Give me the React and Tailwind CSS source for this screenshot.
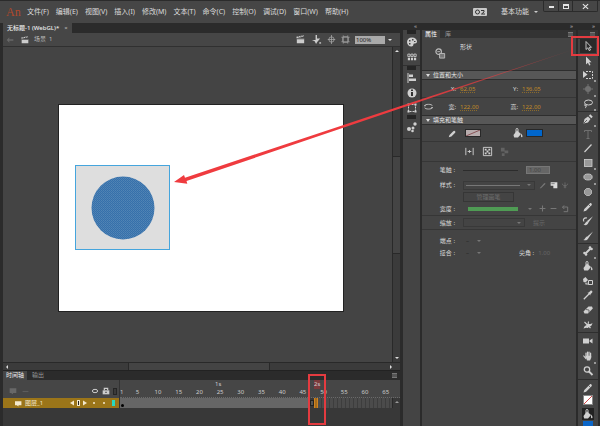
import clsx from "clsx";

const MENU = ["文件(F)", "编辑(E)", "视图(V)", "插入(I)", "修改(M)", "文本(T)", "命令(C)", "控制(O)", "调试(D)", "窗口(W)", "帮助(H)"];
const FRAMES = [5, 10, 15, 20, 25, 30, 35, 40, 45, 50, 55, 60, 65];

const Icon = ({ children, className = "size-[12px]" }) => (
  <svg viewBox="0 0 12 12" className={clsx("shrink-0", className)} fill="currentColor" stroke="none" aria-hidden="true">
    {children}
  </svg>
);

const stroke = { fill: "none", stroke: "currentColor", strokeWidth: 1 };

const Clapper = ({ className }) => (
  <Icon className={className}>
    <path d="M2 5h8v5H2zM1.5 3l8-1.6.3 1.4-8 1.7z" />
    <path d="M3.5 2.4l1 1.6M6 2l1 1.6M8.3 1.5l1 1.6M2 5.3h8" stroke="#444" strokeWidth=".8" />
  </Icon>
);

const Bucket = () => (
  <Icon>
    <path d="M5 3.5L9 7 6 10.5H2.2L1.5 8z" />
    <path d="M4 6V2.5C4 1 6 1 6 2.5V5" {...stroke} />
    <path d="M9.3 6.5c1.5 2 1.6 3.8.5 3.8s-1-1.800-.5-3.800z" />
  </Icon>
);

const Pencil = () => (
  <Icon>
    <path d="M1.500 10.500l.8-2.600L7.800 2.400c1-1 2.800.8 1.800 1.800L4.100 9.700z" />
    <path d="M6.500 3.500l2 2" stroke="#444" strokeWidth=".7" />
  </Icon>
);

const PenNib = () => (
  <Icon>
    <path d="M1.500 10.500l1-4.500 3.500-2.500 2.500 2.500L6 9.500zM6.800 2.700l1.500-1.500 2.500 2.500-1.500 1.500z" />
    <path d="M2 10l3-3" stroke="#444" strokeWidth=".8" />
  </Icon>
);

const TOOL_GROUPS = [
  {
    className: "h-[73px]",
    tools: [
      { name: "选择工具", active: true, icon: <Icon><path d="M4 1.500v8l1.900-1.700 1.300 2.800 1.300-.6-1.300-2.700h2.300z" {...stroke} strokeWidth=".9" /></Icon> },
      { name: "部分选取工具", icon: <Icon><path d="M4 1.500v8l1.900-1.700 1.300 2.800 1.300-.6-1.300-2.700h2.300z" /></Icon> },
      { name: "任意变形工具", more: true, icon: <Icon><path d="M1 2v7l4.500-3.500z" /><path d="M4 2.500h6.500v7H3" {...stroke} strokeDasharray="2 1" /></Icon> },
      { name: "3D旋转工具", more: true, dim: true, icon: <Icon><circle cx="6" cy="6" r="3" /><path d="M6 1v10M1 6h10" {...stroke} /></Icon> },
      { name: "套索工具", more: true, icon: <Icon><ellipse cx="6.500" cy="4.500" rx="4" ry="2.500" {...stroke} /><path d="M3.300 6c-1.500 1-.3 2.300.7 1.500M4 7c.5 1.500 0 2.500-1 3" {...stroke} /></Icon> }
    ]
  },
  {
    className: "h-[132px]",
    tools: [
      { name: "钢笔工具", more: true, icon: <PenNib /> },
      { name: "文本工具", dim: true, icon: <Icon><path d="M2.500 4V2.500h7V4M6 2.500v8M4.500 10.500h3" {...stroke} /></Icon> },
      { name: "线条工具", icon: <Icon><path d="M2.500 10L9.500 2.500" {...stroke} strokeWidth="1.200" /></Icon> },
      { name: "矩形工具", more: true, icon: <Icon><rect x="2.500" y="2.500" width="7.500" height="7" fill="#999" stroke="currentColor" strokeWidth=".8" /></Icon> },
      { name: "椭圆工具", more: true, icon: <Icon><ellipse cx="6" cy="6" rx="4.200" ry="3" fill="#999" stroke="currentColor" strokeWidth=".8" /></Icon> },
      { name: "多角星形工具", icon: <Icon><path d="M4.500 2.500h3l2 2v3l-2 2h-3l-2-2v-3z" fill="#999" stroke="currentColor" strokeWidth=".7" /></Icon> },
      { name: "铅笔工具", icon: <Pencil /> },
      { name: "画笔工具(B)", icon: <Icon><path d="M11 1.200L6.500 7.500 5 6zM5 6.200l1.500 1.300C5.500 10.500 3.500 10.500 1.500 9.800 3 9.200 3.200 7.200 5 6.200z" /><path d="M5 3c-3-.5-4.500 1.500-3 3.500" {...stroke} strokeWidth="1.200" /></Icon> },
      { name: "画笔工具(Y)", icon: <Icon><path d="M11 1.500L6.500 8 5 6.700zM4.800 6.500l1.700 1.500C5.500 10.500 3.500 10.700 1.300 10c1.700-.5 1.700-2.500 3.500-3.500z" /></Icon> }
    ]
  },
  {
    className: "h-[89px]",
    tools: [
      { name: "骨骼工具", more: true, icon: <Icon><path d="M3.500 8.500l5-5" stroke="currentColor" strokeWidth="2" /><circle cx="2.500" cy="8" r="1.300" /><circle cx="4" cy="9.500" r="1.300" /><circle cx="8" cy="2.500" r="1.300" /><circle cx="9.500" cy="4" r="1.300" /></Icon> },
      { name: "颜料桶工具", icon: <Bucket /> },
      { name: "墨水瓶工具", icon: <Icon><path d="M1 4l2.500-2L6 5 3.500 7.500 1.500 7z" /><path d="M6.500 5.500h4v4h-4z" {...stroke} /><path d="M5 7.500L3.500 9H7" {...stroke} /></Icon> },
      { name: "滴管工具", icon: <Icon><path d="M5.500 3.700l1.300-.2L8.300 2c1.200-1.200 2.900.5 1.700 1.700L8.500 5.200l-.2 1.300z" /><path d="M7 5L3 9l-1.200 1.200" stroke="currentColor" strokeWidth="1.300" /></Icon> },
      { name: "橡皮擦工具", icon: <Icon><path d="M1.500 7.500l5-5H10l.8 2L6 9.500H2.500z" /><path d="M4 5.500l3 .5v3" stroke="#555" strokeWidth=".8" fill="none" /></Icon> },
      { name: "宽度工具", icon: <Icon><path d="M1.500 9.500C3 6 4 7 5 5.500S8 6 10.500 4c-1 4-2.500 3-3.500 4S4 8.500 1.500 9.500z" /><path d="M2.500 3l6 6M6.500 2.500L5.500 9" {...stroke} strokeWidth="1.100" /></Icon> }
    ]
  },
  {
    className: "h-[47px]",
    tools: [
      { name: "摄像头", icon: <Icon><path d="M1 3.500h6v5H1zM7.500 5.500l3-2v5l-3-2z" /></Icon> },
      { name: "手形工具", more: true, icon: <Icon><path d="M4 7V3M5.500 6V2M7 6V2M8.600 7V3.200M3.800 8.500L1.800 6" fill="none" stroke="currentColor" strokeWidth="1.200" strokeLinecap="round" /><path d="M3.400 5.800h5.800V8L8 10.500H5z" /></Icon> },
      { name: "缩放工具", icon: <Icon><circle cx="5" cy="4.500" r="2.700" {...stroke} strokeWidth="1.300" /><path d="M7 6.500l3.500 3.500" stroke="currentColor" strokeWidth="1.800" /></Icon> }
    ]
  }
];

const Tool = ({ name, icon, active, more, dim }) => (
  <button
    type="button"
    aria-label={name}
    className={clsx("relative flex items-center justify-center", active && "bg-[#2a2a2a]", dim ? "text-[#707070]" : "text-[#d0d0d0]")}
  >
    {icon}
    {more && <span className="absolute right-0 bottom-0 size-[2px] bg-[#999]" />}
  </button>
);

const TitleBar = () => (
  <header className="flex h-[23px] shrink-0 items-center border-t border-[#2b2b2b] bg-[#464646] pl-[6px] text-[7px] text-[#dcdcdc]">
    <span className="w-[21px] font-['Liberation_Serif'] text-[12px] leading-none text-[#b0492b]">An</span>
    <nav className="flex gap-[7px]">
      {MENU.map((item) => (
        <button type="button" key={item} className="whitespace-nowrap">
          {item}
        </button>
      ))}
    </nav>
    <button type="button" aria-label="同步设置" className="mr-[14px] ml-auto flex h-[8px] w-[14px] items-center justify-center rounded-[1px] bg-[#c8c8c8]">
      <svg viewBox="0 0 14 8" className="h-[8px] w-[14px]" fill="none" stroke="#333" aria-hidden="true">
        <circle cx="4.500" cy="4" r="2" />
        <path d="M8 2.500h3v1.500L8.500 6H12" />
      </svg>
    </button>
    <button type="button" className="flex w-[42px] items-center gap-[5px] whitespace-nowrap">
      基本功能 <span className="border-x-2 border-t-2 border-x-transparent border-t-[#ccc]" />
    </button>
    <div className="mr-[2px] grid h-[11px] w-[55px] grid-cols-[15px_14px_1fr] self-start rounded-b-[2px] border border-t-0 border-[#2b2b2b] text-[#e5e5e5]">
      <button type="button" aria-label="最小化" className="flex items-center justify-center border-r border-[#2b2b2b]">
        <span className="mt-[2px] h-[2px] w-[5px] bg-[#e5e5e5]" />
      </button>
      <button type="button" aria-label="最大化" className="flex items-center justify-center border-r border-[#2b2b2b]">
        <span className="h-[5px] w-[6px] border border-t-2 border-[#e5e5e5]" />
      </button>
      <button type="button" aria-label="关闭" className="flex items-center justify-center">
        <Icon className="size-[7px]"><path d="M1.500 2l9 8M10.500 2l-9 8" stroke="currentColor" strokeWidth="2" /></Icon>
      </button>
    </div>
  </header>
);

const SceneBar = () => (
  <div className="flex h-[14px] shrink-0 items-center border-b border-[#303030] bg-[#464646] pr-[7px] pl-[3px] text-[#ccc]">
    <Icon className="size-[8px] text-[#686868]"><path d="M1 6l4-4v3h6v2H5v3z" /></Icon>
    <Clapper className="mr-[4px] ml-[6px] size-[10px]" />
    <span className="text-[6px] text-[#bbb]">场景&nbsp; 1</span>
    <div className="ml-auto flex items-center gap-[5px]">
      <Clapper className="size-[11px]" />
      <Icon className="size-[11px]"><path d="M5 1h1.500v4H10L7 8.500 5.500 11 4 8 1 6.500h4z" /><path d="M9 9h2v1.500H9z" /></Icon>
      <Icon className="size-[9px] text-[#aaa]"><circle cx="6" cy="6" r="3.500" {...stroke} /><path d="M6 0v12M1 6h10" {...stroke} /></Icon>
      <Icon className="size-[9px] text-[#aaa]"><path d="M2.500 2.500h7v7h-7z" {...stroke} strokeWidth="1.300" /><path d="M0 3h12M0 9h12M3 0v12M9 0v12" stroke="#999" strokeWidth=".7" /></Icon>
    </div>
    <div className="relative ml-[5px] flex h-[8px] w-[38px]">
      <select aria-label="缩放比例" className="h-[8px] w-[30px] appearance-none bg-[#aaa] pl-[1px] text-[6px] leading-[8px] text-[#222]">
        <option>100%</option>
      </select>
      <span className="mt-[3px] ml-[3px] h-0 border-x-2 border-t-2 border-x-transparent border-t-[#ddd]" />
    </div>
  </div>
);

const Stage = () => (
  <div className="flex min-h-0 flex-1">
    <div className="min-w-0 flex-1 overflow-hidden bg-[#444] pt-[57px] pl-[55px]">
      <div className="relative h-[208px] w-[286px] border border-[#222] bg-white">
        <div className="absolute top-[60px] left-[16px] flex h-[85px] w-[95px] items-center justify-center border border-[#45a5dd] bg-[#dedede]">
          <svg viewBox="0 0 64 64" className="size-[64px]" aria-hidden="true">
            <defs>
              <pattern id="dots" width="2" height="2" patternUnits="userSpaceOnUse">
                <rect width="2" height="2" fill="#3670ab" />
                <rect width="1" height="1" fill="#5285b5" />
                <rect x="1" y="1" width="1" height="1" fill="#4a7fb2" />
              </pattern>
            </defs>
            <circle cx="32" cy="32" r="31.500" fill="url(#dots)" />
          </svg>
        </div>
      </div>
    </div>
    <div className="flex w-[8px] flex-col items-center justify-between border-l border-[#292929] bg-[#3b3b3b] py-[3px]">
      <span className="border-x-2 border-b-2 border-x-transparent border-b-[#ddd]" />
      <span className="h-[98px] w-full border-y border-[#292929] bg-[#444]" />
      <span className="border-x-2 border-t-2 border-x-transparent border-t-[#ddd]" />
    </div>
  </div>
);

const MenuLines = () => (
  <span className="block h-[5px] w-[5px] border-y border-[#777] bg-[#555]" />
);

const Timeline = () => (
  <section className="flex h-[56px] shrink-0 flex-col border-t border-[#222] bg-[#383838] text-[6px]">
    <div className="flex h-[9px] shrink-0 items-center bg-[#2b2b2b] pr-[3px] leading-[9px]">
      <button type="button" className="h-full bg-[#464646] px-[3px] text-[#eee]">时间轴</button>
      <button type="button" className="px-[5px] text-[#999]">输出</button>
      <span className="ml-auto"><MenuLines /></span>
    </div>
    <div className="flex h-[18px] shrink-0 bg-[#464646] text-[#ccc]">
      <div className="flex w-[116px] shrink-0 items-end pr-[2px] pb-[3px] pl-[6px]">
        <Icon className="size-[8px] text-[#686868]"><path d="M1 2h10v7H6v2L3 9H1z" /></Icon>
        <Icon className="ml-[5px] size-[7px] text-[#5c5c5c]"><path d="M1 5h10v2H1z" /></Icon>
        <Icon className="ml-auto size-[8px]"><ellipse cx="6" cy="6" rx="4" ry="2.500" {...stroke} strokeWidth="1.500" /></Icon>
        <Icon className="mx-[3px] size-[8px]"><path d="M1 5h10v6H1z" /><path d="M3.500 5V2h5v3" {...stroke} strokeWidth="1.800" /><path d="M5 7h2v2H5z" fill="#444" /></Icon>
        <span className="h-[7px] w-[4px] border border-[#252525] bg-[#3a3a3a]" />
      </div>
      <div className="flex min-w-0 flex-1 flex-col border-l border-[#333]">
        <div className="flex h-[9px] items-center leading-[9px]">
          <span className="w-[194px] pl-[95px]">1s</span>
          <span className="bg-[#7c3a3c]">2s</span>
        </div>
        <div className="flex h-[9px] border-b border-dotted border-[#6a6a6a] pr-[4px] leading-[7px]">
          <span className="w-[7px] shrink-0">1</span>
          <div className="grid flex-1 grid-cols-13 text-center">
            {FRAMES.map((frame) => (
              <span key={frame}>{frame}</span>
            ))}
          </div>
        </div>
      </div>
    </div>
    <div className="flex h-[10px] shrink-0">
      <div className="flex w-[116px] shrink-0 items-center bg-[#9b7519] pr-[4px] pl-[12px] leading-[10px] text-[#f3e8cc]">
        <Icon className="mr-[3px] size-[7px]"><path d="M0 2h11v7H6v2L3 9H0z" /></Icon>
        图层_1
        <Icon className="ml-auto size-[6px]"><path d="M10 1v10L2 6z" /></Icon>
        <span className="mx-[2px] h-[6px] w-[3px] border border-[#f3e8cc] bg-[#222]" />
        <Icon className="size-[6px]"><path d="M2 1v10l8-5z" /></Icon>
        <span className="ml-[5px] size-[2px] rounded-full bg-[#f3e8cc]" />
        <span className="mr-[7px] ml-[8px] size-[2px] rounded-full bg-[#f3e8cc]" />
        <span className="h-[6px] w-[3px] bg-[#28d8c0]" />
      </div>
      <div className="flex min-w-0 flex-1 border-l border-[#333]">
        <span className="flex w-[190px] items-end bg-[#666] p-[1px]">
          <span className="size-[3px] rounded-full bg-black" />
        </span>
        <span className="my-[2px] w-[4px] border border-[#222] bg-[#555]" />
        <span className="w-[4px] border-x border-[#d18320] bg-[#a46c1d]" />
        <span className="flex-1 bg-[repeating-linear-gradient(90deg,#4b4b4b_0px,#4b4b4b_3px,#3d3d3d_3px,#3d3d3d_4px)]" />
        <span className="flex w-[8px] items-start justify-center border-l border-[#292929] pt-[3px]">
          <span className="border-x-2 border-b-2 border-x-transparent border-b-[#999]" />
        </span>
      </div>
    </div>
  </section>
);

const DockGrip = () => <span className="h-[4px] w-full shrink-0 border-x-4 border-[#444] bg-[#252525]" />;

const DockButton = ({ label, children }) => (
  <button type="button" aria-label={label} className="flex h-[15px] w-full items-center justify-center text-[#d0d0d0]">
    {children}
  </button>
);

const Dock = () => (
  <aside className="flex w-[19px] shrink-0 flex-col border-x border-[#2b2b2b] bg-[#444]">
    <div className="h-[7px] shrink-0 bg-[#2b2b2b] pr-[3px] text-right text-[6px] leading-[6px] text-[#bbb]">«</div>
    <DockGrip />
    <DockButton label="颜色">
      <Icon><path d="M6 1.500c3 0 5 2 5 4s-2 2-3 2 0 3-2.500 3S1 8.500 1 6s2-4.500 5-4.500z" /><path d="M3 4h1.500v1.500H3zM6 3h1.500v1.500H6zM3 7h1.500v1.500H3zM8 5h1.500v1H8z" fill="#444" /></Icon>
    </DockButton>
    <DockButton label="样本">
      <Icon className="size-[10px]"><path d="M1 2.500h2.600v3H1zM4.700 2.500h2.600v3H4.700zM8.400 2.500H11v3H8.400z" {...stroke} /><path d="M1 6.800h2.600v3H1zM4.700 6.800h2.600v3H4.700zM8.400 6.800H11v3H8.400z" /></Icon>
    </DockButton>
    <span className="h-[2px] shrink-0 border-b border-[#303030]" />
    <DockGrip />
    <DockButton label="对齐">
      <Icon><path d="M2 1v10" {...stroke} /><path d="M3 2.500h4V5H3zM3 6.500h7V9H3z" /></Icon>
    </DockButton>
    <DockButton label="信息">
      <Icon><circle cx="6" cy="6" r="4.500" /><path d="M5 5h2v4H5zM5 2.500h2V4H5z" fill="#333" /></Icon>
    </DockButton>
    <DockButton label="变形">
      <Icon><path d="M2.500 2.500h7v7h-7z" {...stroke} strokeDasharray="2 1" /><path d="M1.500 1.500h2v2h-2zM8.500 1.500h2v2h-2zM1.500 8.500h2v2h-2zM8.500 8.500h2v2h-2z" /></Icon>
    </DockButton>
    <DockGrip />
    <DockButton label="组件">
      <Icon><circle cx="3" cy="8" r="2" /><circle cx="7" cy="7" r="1.500" /><circle cx="9" cy="3" r="1.700" /><circle cx="6.500" cy="10" r="1.300" /></Icon>
    </DockButton>
    <span className="h-[5px] border-b border-[#303030]" />
  </aside>
);

const SectionHeader = ({ children }) => (
  <h2 className="flex h-[10px] items-center gap-[3px] border-y border-[#2e2e2e] bg-[#575757] pl-[4px] text-[6px] leading-[8px] text-[#e8e8e8]">
    <span className="border-x-2 border-t-3 border-x-transparent border-t-[#ddd]" />
    {children}
  </h2>
);

const NumberField = ({ id, label, value }) => (
  <>
    <label htmlFor={id} className="text-right">{label}:</label>
    <input id={id} defaultValue={value} className="w-[20px] text-[6px] leading-[8px] text-[#c08a28] underline decoration-[#8a6a2c] decoration-dotted underline-offset-1" />
  </>
);

const Row = ({ label, htmlFor, className = "h-[14px]", children }) => (
  <div className={clsx("flex items-center gap-[8px]", className)}>
    <label htmlFor={htmlFor} className="w-[33px] shrink-0 text-right whitespace-nowrap">{label}</label>
    {children}
  </div>
);

const Arrow = () => <span className="border-x-2 border-t-2 border-x-transparent border-t-[#777]" />;

const Properties = () => (
  <aside className="flex w-[156px] shrink-0 flex-col border-x border-[#2b2b2b] bg-[#444] text-[6px] leading-[8px] text-[#ddd]">
    <div className="h-[7px] shrink-0 bg-[#2b2b2b] pr-[3px] text-right leading-[6px] text-[#bbb]">»</div>
    <div className="flex h-[8px] items-center bg-[#333] pr-[3px]">
      <button type="button" className="h-full bg-[#444] px-[3px] text-white">属性</button>
      <button type="button" className="px-[5px] text-[#999]">库</button>
      <span className="ml-auto"><MenuLines /></span>
    </div>
    <div className="flex h-[32px] gap-[14px] pt-[5px] pl-[13px]">
      <Icon className="mt-[5px] size-[11px] text-[#bbb]"><circle cx="4" cy="4" r="3" {...stroke} strokeWidth="1.300" /><path d="M5 6h5.500v5H5z" {...stroke} fill="#777" /><path d="M2.500 4h3" {...stroke} /></Icon>
      <span>形状</span>
    </div>
    <SectionHeader>位置和大小</SectionHeader>
    <div className="grid h-[18px] grid-cols-[34px_20px_34px_20px] items-center gap-x-[4px] border-b border-[#363636]">
      <NumberField id="pos-x" label="X" value="62.05" />
      <NumberField id="pos-y" label="Y" value="136.05" />
    </div>
    <div className="relative grid h-[17px] grid-cols-[34px_20px_34px_20px] items-center gap-x-[4px]">
      <button type="button" aria-label="锁定宽高比" className="absolute left-[2px] text-[#bbb]">
        <Icon className="size-[9px]"><path d="M1 5C1 2.500 11 2.500 11 5M1 7.500C1 10 11 10 11 7.500M0 5h2.500M9.500 7.500H12" {...stroke} strokeWidth="1.300" /></Icon>
      </button>
      <NumberField id="size-w" label="宽" value="122.00" />
      <NumberField id="size-h" label="高" value="122.00" />
    </div>
    <SectionHeader>填充和笔触</SectionHeader>
    <div className="flex h-[17px] items-center border-b border-[#363636] pl-[26px] text-[#d0d0d0]">
      <Icon className="size-[9px]"><path d="M1 11l1-3 5-5c1-2 4 0 2.500 2l-5 5z" /></Icon>
      <button type="button" aria-label="笔触颜色" className="ml-[8px] h-[8px] w-[16px] border border-[#282828] bg-[#b8acad]">
        <svg viewBox="0 0 14 6" className="h-full w-full" aria-hidden="true"><path d="M0 6L14 0" stroke="#8a5558" /></svg>
      </button>
      <span className="ml-[31px]"><Bucket /></span>
      <button type="button" aria-label="填充颜色" className="ml-[2px] h-[8px] w-[17px] border border-[#282828] bg-[#0066cc]" />
    </div>
    <div className="flex h-[20px] items-center gap-[7px] border-b border-[#363636] pl-[42px] text-[#d0d0d0]">
      <Icon className="size-[11px]"><path d="M2 2v8M10 2v8M4 6h4M6 4.500v3" {...stroke} /></Icon>
      <Icon className="size-[11px]"><path d="M1.500 1.500h9v9h-9z" {...stroke} /><path d="M3 3h2v2H3zM5 5h2v2H5zM3 7h2v2H3zM7 3h2v2H7zM7 7h2v2H7z" /></Icon>
      <Icon className="size-[11px] text-[#626262]"><path d="M1 2h4v4H1zM5 5h4v3H5zM2 8h3v3H2z" /></Icon>
    </div>
    <Row label="笔触 :" htmlFor="stroke-size" className="h-[16px]">
      <input type="range" aria-label="笔触滑块" disabled className="h-[1px] w-[55px] appearance-none bg-[#2c2c2c] [&::-webkit-slider-thumb]:appearance-none" />
      <input id="stroke-size" defaultValue="1.00" disabled className="h-[8px] w-[24px] border border-[#777] bg-[#666] pl-[2px] text-[6px] text-[#444]" />
    </Row>
    <Row label="样式 :" htmlFor="stroke-style">
      <div className="relative flex h-[9px] w-[72px] items-center justify-end border border-[#393939] pr-[3px]">
        <select id="stroke-style" className="absolute inset-0 appearance-none text-transparent"><option>实线</option></select>
        <span className="mr-[7px] h-[1px] w-[54px] bg-[#777]" />
        <Arrow />
      </div>
      <div className="-ml-[4px] flex items-center gap-[3px] text-[#777]">
        <Icon className="size-[8px]"><path d="M1 11l7-8 2 1-7 7z" /></Icon>
        <Icon className="size-[8px] text-[#ddd]"><path d="M1 2h10v9H5V7H1z" /><path d="M2 4h5" stroke="#555" /></Icon>
        <Icon className="size-[8px]"><path d="M6 2v9M2 4c0 4 8 4 8 0M4 9h4" {...stroke} /></Icon>
      </div>
    </Row>
    <div className="flex h-[10px] pl-[41px]">
      <button type="button" disabled className="w-[51px] border border-[#363636] leading-[8px] text-[#6e6e6e]">管理画笔</button>
    </div>
    <Row label="宽度 :" htmlFor="stroke-width" className="h-[14px] border-b border-[#363636]">
      <div className="relative flex h-[9px] w-[72px] items-center justify-end pr-[3px]">
        <select id="stroke-width" className="absolute inset-0 appearance-none text-transparent"><option>均匀</option></select>
        <span className="mr-[10px] h-[4px] w-[50px] bg-[#4f9b54]" />
        <Arrow />
      </div>
      <div className="-ml-[4px] flex items-center gap-[4px] text-[#777]">
        <Icon className="size-[7px]"><path d="M6 1v10M1 6h10" {...stroke} strokeWidth="1.800" /></Icon>
        <Icon className="size-[7px]"><path d="M1 6h10" {...stroke} strokeWidth="1.800" /></Icon>
        <Icon className="size-[8px]"><path d="M3 3h7v7H4M5 1L2 3l3 3" {...stroke} strokeWidth="1.500" /></Icon>
      </div>
    </Row>
    <Row label="缩放 :" htmlFor="scale" className="h-[14px] border-b border-[#363636]">
      <div className="relative flex h-[9px] w-[62px] items-center justify-end border border-[#393939] pr-[3px]">
        <select id="scale" className="absolute inset-0 appearance-none text-transparent"><option>一般</option></select>
        <Arrow />
      </div>
      <span className="text-[#686868]">提示</span>
    </Row>
    <Row label="端点 :" className="mt-[4px] h-[13px]">
      <button type="button" aria-label="端点样式" className="flex items-center gap-[8px] pl-[3px] text-[#222]">– <Arrow /></button>
    </Row>
    <Row label="接合 :" className="h-[12px]">
      <button type="button" aria-label="接合样式" className="flex items-center gap-[8px] pl-[3px] text-[#222]">– <Arrow /></button>
      <label htmlFor="miter" className="ml-[30px] whitespace-nowrap">尖角 :</label>
      <input id="miter" defaultValue="1.00" disabled className="-ml-[4px] w-[16px] text-[#666]" />
    </Row>
  </aside>
);

const Toolbar = () => (
  <aside className="flex w-[23px] shrink-0 flex-col overflow-hidden border-r-2 border-l border-[#2b2b2b] bg-[#444]">
    <div className="h-[7px] shrink-0 bg-[#2b2b2b] pr-[3px] text-right text-[6px] leading-[6px] text-[#bbb]">»</div>
    <div className="flex h-[9px] shrink-0 items-center justify-end bg-[#333] pr-[3px]">
      <MenuLines />
    </div>
    {TOOL_GROUPS.map(({ className, tools }) => (
      <div key={tools[0].name} className={clsx("grid shrink-0 auto-rows-fr border-b border-[#2e2e2e] px-[2px]", className)}>
        {tools.map((tool) => (
          <Tool key={tool.name} {...tool} />
        ))}
      </div>
    ))}
    <div className="flex flex-col items-center gap-[1px] pt-[2px] text-[#d0d0d0]">
      <Pencil />
      <button type="button" aria-label="笔触颜色" className="size-[10px] border border-[#888] bg-white">
        <svg viewBox="0 0 8 8" className="size-[8px]" aria-hidden="true"><path d="M0 8L8 0" stroke="#d34b4b" /></svg>
      </button>
      <span className="mt-[2px] bg-[#222]"><Bucket /></span>
      <button type="button" aria-label="填充颜色" className="size-[10px] bg-[#0b66c8]" />
    </div>
  </aside>
);

// Red guide marks drawn over the workspace
const Annotations = () => (
  <div className="pointer-events-none absolute inset-0">
    <svg viewBox="0 0 600 426" className="absolute top-0 left-0 h-[426px] w-[600px]" aria-hidden="true">
      <defs>
        <linearGradient id="tail" gradientUnits="userSpaceOnUse" x1="400" y1="107" x2="572" y2="50">
          <stop offset="0" stopColor="#ef3b3f" />
          <stop offset="1" stopColor="#ef3b3f" stopOpacity=".3" />
        </linearGradient>
      </defs>
      <path d="M174 182l10-7 1 2.700L400 106.200 572 50 400 108.500 186.500 181l.8 2.700z" fill="url(#tail)" />
    </svg>
    <span className="absolute top-[36px] left-[571px] h-[20px] w-[28px] border-2 border-[#e43b40]" />
    <span className="absolute top-[374px] left-[308px] h-[51px] w-[18px] border-2 border-[#e43b40]" />
  </div>
);

export default function App() {
  return (
    <div className="relative flex h-screen flex-col overflow-hidden bg-[#444] font-['Noto_Sans','Noto_Sans_CJK_SC',sans-serif]">
      <TitleBar />
      <div className="flex min-h-0 flex-1">
        <main className="flex min-w-0 flex-1 flex-col border-r-2 border-l-3 border-[#2b2b2b]">
          <div className="flex h-[10px] shrink-0 bg-[#2b2b2b]">
            <button type="button" className="flex items-center gap-[5px] bg-[#464646] px-[4px] text-[6px] leading-[10px] font-medium whitespace-nowrap text-[#eee]">
              无标题-1 (WebGL)* <span className="text-[#aaa]">×</span>
            </button>
          </div>
          <SceneBar />
          <Stage />
          <div className="flex h-[8px] shrink-0 items-center border-t border-[#292929] bg-[#3b3b3b] px-[3px]">
            <span className="border-y-2 border-r-2 border-y-transparent border-r-[#ddd]" />
            <span className="mx-auto h-full w-[142px] border-x border-[#292929] bg-[#444]" />
            <span className="mr-[5px] border-y-2 border-l-2 border-y-transparent border-l-[#ddd]" />
          </div>
          <Timeline />
        </main>
        <Dock />
        <Properties />
        <Toolbar />
      </div>
      <Annotations />
    </div>
  );
}
